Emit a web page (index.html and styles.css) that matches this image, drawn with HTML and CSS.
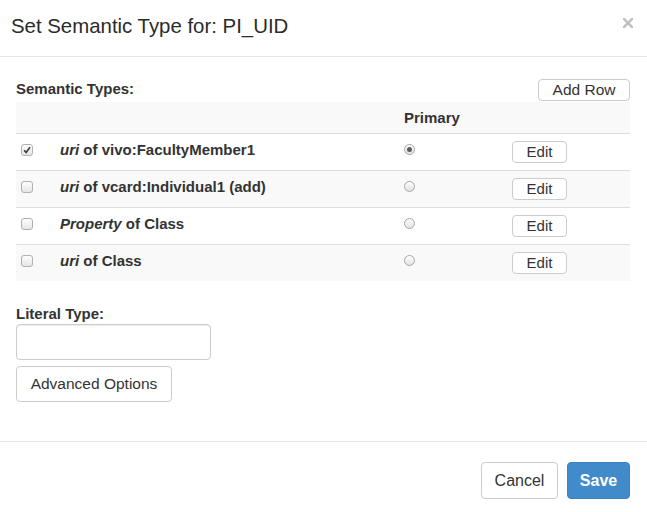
FILE: index.html
```html
<!DOCTYPE html>
<html>
<head>
<meta charset="utf-8">
<link rel="stylesheet" href="styles.css">
</head>
<body>
<div class="modal">
  <div class="modal-header">
    <h4 class="modal-title">Set Semantic Type for: PI_UID</h4>
    <span class="close" aria-label="Close"><svg width="10" height="10" viewBox="0 0 10 10"><path d="M1 1L9 9M9 1L1 9" stroke="#c2c2c2" stroke-width="2.6" stroke-linecap="square"/></svg></span>
  </div>
  <div class="modal-body">
    <div class="toolbar">
      <span class="label">Semantic Types:</span>
      <button class="btn btn-sm">Add Row</button>
    </div>
    <table class="types">
      <tr class="head">
        <th class="c-check"></th>
        <th class="c-label"></th>
        <th class="c-primary">Primary</th>
        <th class="c-edit"></th>
      </tr>
      <tr>
        <td><span class="cb checked"><svg width="8" height="8" viewBox="0 0 8 8"><path d="M1 4.2L3.1 6.4L7 1.2" fill="none" stroke="#3a3a3a" stroke-width="1.6"/></svg></span></td>
        <td class="name"><i>uri</i> of vivo:FacultyMember1</td>
        <td><span class="radio checked"></span></td>
        <td><button class="btn btn-xs">Edit</button></td>
      </tr>
      <tr>
        <td><span class="cb"></span></td>
        <td class="name"><i>uri</i> of vcard:Individual1 (add)</td>
        <td><span class="radio"></span></td>
        <td><button class="btn btn-xs">Edit</button></td>
      </tr>
      <tr>
        <td><span class="cb"></span></td>
        <td class="name"><i>Property</i> of Class</td>
        <td><span class="radio"></span></td>
        <td><button class="btn btn-xs">Edit</button></td>
      </tr>
      <tr>
        <td><span class="cb"></span></td>
        <td class="name"><i>uri</i> of Class</td>
        <td><span class="radio"></span></td>
        <td><button class="btn btn-xs">Edit</button></td>
      </tr>
    </table>
    <div class="literal">
      <div class="label">Literal Type:</div>
      <input class="text-input" type="text">
      <button class="btn btn-md">Advanced Options</button>
    </div>
  </div>
  <div class="modal-footer">
    <button class="btn btn-lg">Cancel</button>
    <button class="btn btn-lg btn-primary">Save</button>
  </div>
</div>
</body>
</html>
```

FILE: styles.css
```css
html, body {
  margin: 0;
  padding: 0;
  background: #fff;
}
body {
  font-family: "Liberation Sans", Arial, Helvetica, sans-serif;
  color: #333;
  font-size: 15px;
  line-height: 20px;
}
.modal {
  width: 647px;
  height: 512px;
  display: flex;
  flex-direction: column;
}
.modal-header {
  height: 56px;
  border-bottom: 1px solid #e5e5e5;
  display: flex;
  justify-content: space-between;
  padding: 0 14px 0 11px;
}
.modal-title {
  margin: 0;
  padding-top: 14px;
  font-size: 20.4px;
  line-height: 24px;
  font-weight: normal;
  color: #2b2b2b;
}
.close {
  display: block;
  padding-top: 18px;
  height: 10px;
}
.close svg { display: block; }
.modal-body {
  padding: 22px 17px 0 16px;
  height: 362px;
}
.toolbar {
  display: flex;
  justify-content: space-between;
  align-items: flex-start;
  height: 23px;
}
.label {
  font-weight: bold;
  color: #333;
}
.btn {
  font-family: "Liberation Sans", Arial, Helvetica, sans-serif;
  color: #333;
  background: #fff;
  border: 1px solid #ccc;
  border-radius: 4px;
  padding: 0;
  margin: 0;
  box-sizing: border-box;
}
.btn-sm {
  width: 92px;
  height: 22px;
  font-size: 15.5px;
  line-height: 20px;
}
.btn-xs {
  width: 55px;
  height: 22px;
  font-size: 15px;
  line-height: 20px;
}
.btn-md {
  display: block;
  width: 156px;
  height: 36px;
  font-size: 15.5px;
  margin-top: 6px;
}
.btn-lg {
  height: 37px;
  font-size: 16px;
}
.types {
  width: 614px;
  border-collapse: collapse;
  table-layout: fixed;
}
.types th, .types td {
  padding: 0 5px;
  text-align: left;
  vertical-align: middle;
}
.types tr {
  height: 37px;
  border-top: 1px solid #ddd;
}
.types tr.head {
  height: 31px;
  border-top: 0;
  background: #f9f9f9;
}
.types tr:nth-child(odd) { background: #f9f9f9; }
.types th {
  font-weight: bold;
  padding-top: 1px;
}
.c-check { width: 29px; }
.c-label { width: 334px; }
.c-primary { width: 98px; }
.c-edit { width: auto; }
.name {
  font-weight: bold;
  padding-bottom: 4px !important;
}
.name i { font-style: italic; }
.cb {
  display: block;
  width: 12px;
  height: 12px;
  box-sizing: border-box;
  border: 1px solid #b0b0b0;
  border-radius: 3px;
  background: linear-gradient(#fdfdfd, #e6e6e6);
  margin-bottom: 3px;
  position: relative;
}
.cb svg {
  position: absolute;
  left: 1px;
  top: 1px;
}
.radio {
  display: block;
  width: 11px;
  height: 11px;
  box-sizing: border-box;
  border: 1px solid #a8a8a8;
  border-radius: 50%;
  background: linear-gradient(#fdfdfd, #e2e2e2);
  margin-bottom: 4px;
  position: relative;
}
.radio.checked::after {
  content: "";
  position: absolute;
  left: 2px;
  top: 2px;
  width: 5px;
  height: 5px;
  border-radius: 50%;
  background: #5a5a5a;
}
.literal {
  padding-top: 23px;
}
.text-input {
  display: block;
  width: 195px;
  height: 36px;
  box-sizing: border-box;
  border: 1px solid #ccc;
  border-radius: 4px;
  box-shadow: inset 0 1px 1px rgba(0,0,0,0.075);
  margin: 0;
}
.modal-footer {
  border-top: 1px solid #e5e5e5;
  padding: 20px 17px 0 0;
  display: flex;
  justify-content: flex-end;
  gap: 9px;
  flex: 1;
}
.modal-footer .btn:first-child { width: 77px; }
.btn-primary {
  width: 63px;
  background: #428bca;
  border-color: #3b82c0;
  color: #fff;
  font-weight: bold;
}
```
